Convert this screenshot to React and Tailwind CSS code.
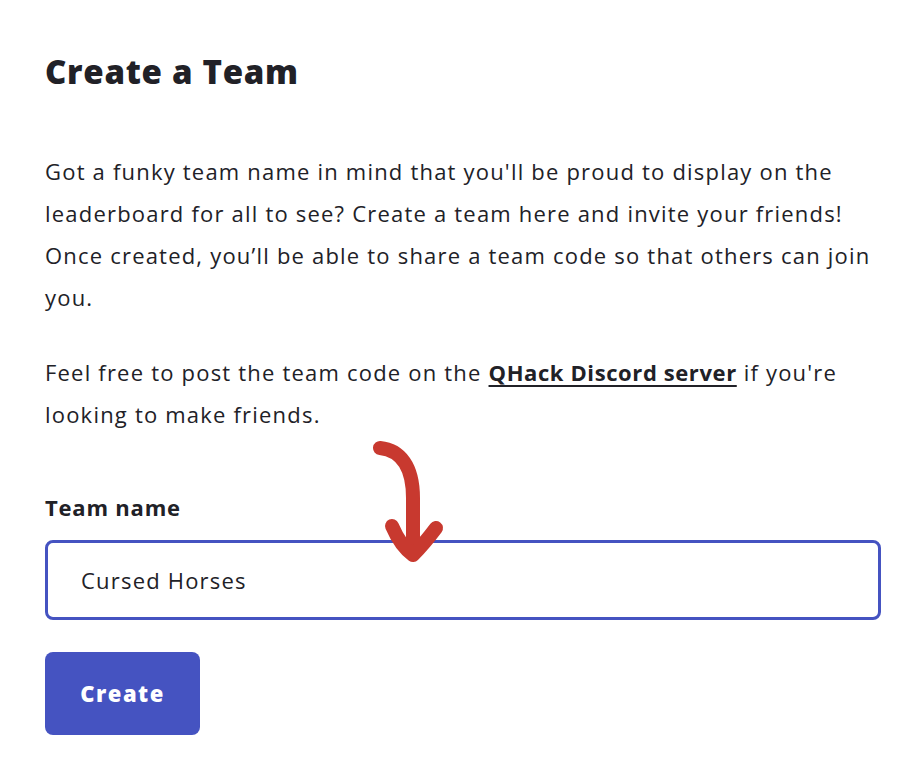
import React from "react";

function Arrow() {
  return (
    <svg
      className="absolute left-[368px] top-[436px] pointer-events-none"
      width="90"
      height="130"
      viewBox="0 0 90 130"
      fill="none"
    >
      <path
        d="M12 12 C 32 14, 45 30, 45 62 L 45 112"
        stroke="#c8392f"
        strokeWidth="14"
        strokeLinecap="round"
        fill="none"
      />
      <path
        d="M24 90 C 30 104, 38 114, 45 119 C 54 110, 62 100, 68 92"
        stroke="#c8392f"
        strokeWidth="14"
        strokeLinecap="round"
        strokeLinejoin="round"
        fill="none"
      />
    </svg>
  );
}

export default function App() {
  return (
    <div
      className="relative min-h-[782px] w-[914px] bg-white text-[#212127]"
      style={{ fontFamily: "'Open Sans', 'Noto Sans', sans-serif" }}
    >
      <div className="px-[45px] pt-[50px]">
        <h1 className="text-[33px] leading-[44px] font-extrabold tracking-[0.7px]">Create a Team</h1>
        <p className="mt-[56px] whitespace-nowrap text-[22px] leading-[42px] tracking-[1.2px]">
          Got a funky team name in mind that you'll be proud to display on the
          <br />
          leaderboard for all to see? Create a team here and invite your friends!
          <br />
          Once created, you’ll be able to share a team code so that others can join
          <br />
          you.
        </p>
        <p className="mt-[33px] whitespace-nowrap text-[22px] leading-[42px] tracking-[1.2px]">
          Feel free to post the team code on the{" "}
          <a href="#" className="font-bold underline underline-offset-[4px] decoration-2 tracking-[0.6px]">
            QHack Discord server
          </a>{" "}
          if you're
          <br />
          looking to make friends.
        </p>
        <label className="mt-[55px] block text-[22px] leading-[34px] font-bold tracking-[0.8px]">Team name</label>
        <div className="mt-[16px] flex h-[80px] w-[836px] items-center rounded-[8px] border-[3px] border-[#4553c1] px-[33px] text-[22px] tracking-[1.2px]">
          Cursed Horses
        </div>
        <button className="mt-[32px] flex h-[83px] w-[155px] items-center justify-center rounded-[8px] bg-[#4553c1] text-[22px] font-extrabold tracking-[1.5px] text-white">
          Create
        </button>
      </div>
      <Arrow />
    </div>
  );
}
